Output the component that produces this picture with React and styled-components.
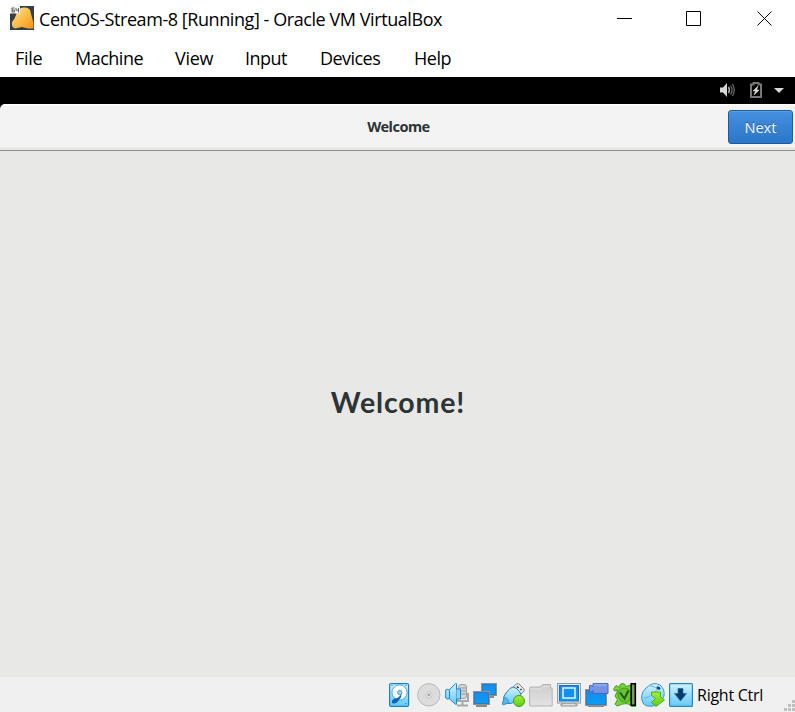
import React from "react";
import styled, { createGlobalStyle } from "styled-components";

const Global = createGlobalStyle`
  * { box-sizing: border-box; }
  body { margin: 0; background: #fff; overflow: hidden; }
`;

const Window = styled.div`
  width: 795px;
  height: 712px;
  display: flex;
  flex-direction: column;
  background: #fff;
  color: #000;
  font-family: "Open Sans", "Noto Sans", sans-serif;
  font-size: 18px;
`;

const TitleBar = styled.header`
  height: 40px;
  display: flex;
  align-items: flex-start;
  padding: 6px 22px 0 10px;
`;

const Title = styled.h1`
  margin: 0 auto 0 5px;
  font-size: 18px;
  font-weight: 400;
  line-height: 27px;
  letter-spacing: -0.43px;
  white-space: nowrap;
`;

const Controls = styled.div`
  display: grid;
  grid-template-columns: 69px 71px 16px;
  padding-top: 4px;
`;

const MenuBar = styled.nav`
  height: 37px;
  display: grid;
  grid-template-columns: 60px 100px 70px 75px 94px 60px;
  padding: 5px 0 0 15px;
`;

const MenuItem = styled.span`
  line-height: 27px;
  letter-spacing: ${(p) => p.$track};
`;

const Guest = styled.main`
  flex: 1;
  display: flex;
  flex-direction: column;
  background: #000;
  font-family: "Noto Sans", "Open Sans", sans-serif;
`;

const TopPanel = styled.div`
  height: 27px;
  display: flex;
  justify-content: flex-end;
  align-items: flex-start;
`;

const HeaderBar = styled.div`
  height: 47px;
  display: grid;
  grid-template-columns: 67px 1fr 67px;
  align-items: center;
  padding-bottom: 1px;
  background: linear-gradient(#fff 0 1px, #f3f3f3 2px 43px, #e6e6e3 44px 46px, #8d8e87 46px);
  border-top-left-radius: 5px;
`;

const HeaderTitle = styled.span`
  grid-column: 2;
  padding: 0 0 3px 2px;
  text-align: center;
  color: #2e3436;
  font-size: 14.5px;
  font-weight: 700;
  letter-spacing: -0.5px;
`;

const NextButton = styled.button`
  width: 65px;
  height: 34px;
  padding: 0 0 1px;
  border: 1px solid #1b5ba3;
  border-radius: 3px;
  background: linear-gradient(#4690df, #2a76c8);
  box-shadow: inset 0 1px #5b9fe5;
  color: #f2f4f6;
  font-family: inherit;
  font-size: 14.5px;
  text-shadow: 0 -1px #1f5c9f;
`;

const Content = styled.section`
  flex: 1;
  display: flex;
  justify-content: center;
  padding: 231px 0 0 1px;
  background: #e8e8e6;
`;

const Welcome = styled.h2`
  margin: 0;
  color: #2e3436;
  font-family: Lato, sans-serif;
  font-size: 28.5px;
  line-height: 41px;
  font-weight: 700;
  letter-spacing: 0.85px;
`;

const StatusBar = styled.footer`
  height: 35px;
  display: flex;
  align-items: flex-start;
  gap: 4px;
  padding: 6px 0 0 389px;
  background: #f0f0f0;
`;

const StatusIcon = styled.svg`
  width: 24px;
  height: 24px;
  flex: none;
`;

const HostKey = styled.span`
  flex: none;
  font-size: 16px;
  line-height: 24px;
  letter-spacing: -0.25px;
  width: 83px;
  white-space: nowrap;
`;

const Grip = styled.svg`
  flex: none;
  width: 11px;
  height: 11px;
  margin-top: 17px;
`;

function Gradients() {
  return (
    <defs>
      <linearGradient id="blue" x2="0" y2="1"><stop stopColor="#1c87ee" /><stop offset="1" stopColor="#08a0f4" /></linearGradient>
      <linearGradient id="sky" x2="0" y2="1"><stop stopColor="#d5f1ff" /><stop offset="1" stopColor="#62c9fb" /></linearGradient>
      <linearGradient id="gold" x2="1" y2="1"><stop stopColor="#ffe39a" /><stop offset=".5" stopColor="#fbbf4b" /><stop offset="1" stopColor="#f29413" /></linearGradient>
      <linearGradient id="lime" x2="0" y2="1"><stop stopColor="#a2ef3b" /><stop offset="1" stopColor="#5ccd12" /></linearGradient>
      <linearGradient id="gray" x2="0" y2="1"><stop stopColor="#cdcdcd" /><stop offset="1" stopColor="#e2e2e2" /></linearGradient>
    </defs>
  );
}

function AppIcon() {
  return (
    <svg width="24" height="24" viewBox="0 0 24 24">
      <Gradients />
      <rect width="24" height="24" fill="#343e4b" />
      <path d="M9 3Q11 1 15 1.5Q19 2 20 4L23.5 17V22.500H18L12 21L5 22.500Q1 21 2 16Q5 13 7 6Z" fill="url(#gold)" />
      <rect width="10" height="7.500" fill="#f4f4f2" />
      <path d="M4.500 2H2v4h2.500V4H2M6 2v2.200h2.500M8.500 2v4.500" fill="none" stroke="#555" strokeWidth=".9" />
    </svg>
  );
}

function WindowControls() {
  return (
    <Controls>
      <svg width="16" height="16"><path d="M0 8.500h15" stroke="#000" /></svg>
      <svg width="16" height="16"><path d="M.5 1.500h14v14H.5z" fill="none" stroke="#000" /></svg>
      <svg width="16" height="16"><path d="M.5 1.500l14 14M14.500 1.500l-14 14" stroke="#000" /></svg>
    </Controls>
  );
}

function TrayIcons() {
  return (
    <svg width="76" height="27" viewBox="719 77 76 27">
      <path d="M720 87.500h3l4-4.500v14l-4-4.500h-3z" fill="#d8d8d4" />
      <path d="M728.500 87q1.800 3 0 6" fill="none" stroke="#b0b0ac" strokeWidth="1.500" />
      <path d="M730.500 85.500q3 4.500 0 9M732.500 84q3.500 6 0 12" fill="none" stroke="#666" strokeWidth="1.300" />
      <path d="M751 84.500h2.500V83h5v1.500h2.500V97h-10z" fill="none" stroke="#777773" strokeWidth="2" />
      <path d="M758 86l-5 5h2.500l-1.500 4 5.200-5h-2.600z" fill="#e0e0dc" stroke="#e0e0dc" strokeWidth=".5" />
      <path d="M774 88h10l-5 5z" fill="#d8d8d4" />
    </svg>
  );
}

const Monitor = ({ x, y, w, h }) => (
  <g>
    <path d={`M${x + 3} ${y + h + 1}h${w - 6}`} stroke="#858b8f" strokeWidth="2" />
    <rect x={x + 0.5} y={y + 0.5} width={w - 1} height={h - 1} fill="#e8eef2" stroke="#8c9499" />
    <rect x={x + 1.5} y={y + 1.5} width={w - 3} height={h - 3} fill="url(#blue)" stroke="#2b7dbd" />
  </g>
);

const statusIcons = {
  disk: (
    <>
      <rect x=".6" y=".6" width="19" height="22.800" rx="1.500" fill="url(#sky)" stroke="#1583cc" strokeWidth="1.200" />
      <circle cx="10.500" cy="9.500" r="7.600" fill="#fff" stroke="#4aa4dc" />
      <circle cx="10.800" cy="9.500" r="2.200" fill="#9ed3f4" stroke="#3a8ac6" strokeWidth=".8" />
      <path d="M3 20Q2.500 16 6 15.500Q9 15.500 12.500 11Q13 14 10 17Q7 22 3 20Z" fill="#0d66b8" />
      <path d="M3 2v1M17 2v1M17 20v1" stroke="#137abb" />
    </>
  ),
  disc: (
    <>
      <circle cx="11.800" cy="11.800" r="11.200" fill="#dcdcdc" stroke="#b9b9b9" />
      <circle cx="11.800" cy="11.800" r="3.300" fill="#e6e6e6" stroke="#c6c6c6" />
      <circle cx="11.800" cy="11.800" r="1.500" fill="#a8a8a8" />
    </>
  ),
  audio: (
    <>
      <path d="M12 10v8h11v-8M17.500 18v5M12 22.500h11" fill="none" stroke="#a8a8a8" strokeWidth="2" />
      <rect x="13.500" y="1.500" width="8" height="14" rx="2.500" fill="#d4d4d4" stroke="#a0a0a0" />
      <path d="M15 5h6M15 8h6M15 11h6" stroke="#9b9b9b" />
      <path d="M.7 7Q2 5.500 4 7L10.500.7h1v20.600h-1L4 15.500Q2 17 .7 15z" fill="url(#sky)" stroke="#168bc8" />
      <path d="M4.500 7.500v8M11.500 6h4v10h-4" fill="#8bd2fa" stroke="#1784c4" />
    </>
  ),
  network: <><Monitor x={8} y={0} w={16} h={13} /><Monitor x={0} y={8} w={17} h={14} /></>,
  usb: (
    <>
      <path d="M11.500 4.500L16 .6q1 0 2 .4l5 5q.5 1 0 2l-4 4z" fill="#e8e8e8" stroke="#888" />
      <path d="M16 3.500l1.500 1.500M19.500 6l1 1" stroke="#333" strokeWidth="1.600" />
      <path d="M3 21Q0 21 2.500 18 2 13 5 10L9 5.500q3-3 6.500 0l3 3q3 3 0 6l-6 5q-3 1.500-6 1z" fill="url(#sky)" stroke="#2583ba" />
      <path d="M3.500 14q4 1 4.500 5.500L2 22q-1 0-.5-1z" fill="#55b5ed" stroke="#258bc6" strokeWidth=".6" />
      <circle cx="18" cy="18" r="5.500" fill="url(#lime)" stroke="#439d12" />
    </>
  ),
  folder: (
    <>
      <path d="M.6 5.500Q.6 4 2 4h9l3-2.500h7.500V5h1.700v18H.6z" fill="url(#gray)" stroke="#b5b5b5" />
      <path d="M1.500 6H12l2-2.500h7" fill="none" stroke="#e0e0e0" />
    </>
  ),
  display: (
    <>
      <path d="M6 20h12v1h2v2H4v-2h2z" fill="#ddd" stroke="#949494" />
      <rect x=".6" y=".5" width="22.800" height="19.500" fill="#e8edf0" stroke="#8d969b" />
      <rect x="2.500" y="2.500" width="19" height="15.500" fill="url(#blue)" stroke="#1677c0" />
      <rect x="6" y="5" width="12" height="10" fill="#1090f4" stroke="#e8f5ff" strokeWidth="1.500" />
    </>
  ),
  recording: (
    <>
      <Monitor x={0} y={6} w={22} h={17} />
      <path d="M4.500 2.500q1-.5 2 0l1.500 1V.6h15v9.800H8V7.500L6.500 9q-1 .5-2 0z" fill="#7693e5" stroke="#4867b8" />
      <path d="M9 2h13" stroke="#a5b9f4" />
    </>
  ),
  turtle: (
    <>
      <path d="M5 7L1.500 8 .6 6 3 2.500l4 2Q6 1 9 .6q3-.5 4 3l5-1.500 3 2-2 5v7l2 4-2 2.500-5-2-5 .5-5 2-2-2 2.500-4.500L2 13z" fill="#79d33e" stroke="#489b21" />
      <path d="M5 9q4-6 10-3 5 5 2 11-4 4-9 1-4-4-3-9z" fill="#68c330" stroke="#479a22" />
      <path d="M7 9.500l4.500 6 4-8" stroke="#24571a" strokeWidth="2" fill="none" />
      <path d="M18 23h5" stroke="#18ef0a" strokeWidth="2" />
      <rect x="18.200" y=".7" width="4.100" height="21.600" fill="#829374" stroke="#000" strokeWidth="1.600" />
    </>
  ),
  mouse: (
    <>
      <path d="M2 20Q-2 12 5 5 12-2 19 2q5 4 4 11-3 8-11 10-8 1-10-3z" fill="url(#sky)" stroke="#3996c9" />
      <path d="M3 15Q12 14 17 5M9 3q4 0 8 3" fill="none" stroke="#65b9e4" />
      <ellipse cx="17.500" cy="5" rx="2.200" ry="1.500" transform="rotate(30 17.500 5)" fill="#0a4d78" />
      <path d="M10.500 9h9v5l4 3-8.500 6.500-4.500-4 4-4-4-3z" fill="url(#lime)" stroke="#58a921" />
    </>
  ),
  capture: (
    <>
      <rect x=".6" y=".6" width="22.800" height="22.800" rx="1" fill="url(#sky)" stroke="#2387c0" strokeWidth="1.200" />
      <path d="M9 5.500h5v5h3.500l-6 7.500-6-7.500H9z" fill="#093b6c" stroke="#1973ab" strokeWidth=".7" />
    </>
  ),
};

const menus = [
  ["File", "-0.3px"],
  ["Machine", "-0.5px"],
  ["View", "-0.3px"],
  ["Input", "-0.5px"],
  ["Devices", "-0.55px"],
  ["Help", "-0.5px"],
];

export default function App() {
  return (
    <>
      <Global />
      <Window>
        <TitleBar>
          <AppIcon />
          <Title>CentOS-Stream-8 [Running] - Oracle VM VirtualBox</Title>
          <WindowControls />
        </TitleBar>
        <MenuBar>
          {menus.map(([name, track]) => <MenuItem key={name} $track={track}>{name}</MenuItem>)}
        </MenuBar>
        <Guest>
          <TopPanel><TrayIcons /></TopPanel>
          <HeaderBar>
            <HeaderTitle>Welcome</HeaderTitle>
            <NextButton>Next</NextButton>
          </HeaderBar>
          <Content><Welcome>Welcome!</Welcome></Content>
        </Guest>
        <StatusBar>
          {Object.entries(statusIcons).map(([name, art]) => (
            <StatusIcon key={name} viewBox="0 0 24 24">{art}</StatusIcon>
          ))}
          <HostKey>Right Ctrl</HostKey>
          <Grip viewBox="0 0 11 11">
            <path d="M8 0h3v3H8zM4 4h3v3H4zM8 4h3v3H8zM0 8h3v3H0zM4 8h3v3H4zM8 8h3v3H8z" fill="#bfbfbf" />
          </Grip>
        </StatusBar>
      </Window>
    </>
  );
}
